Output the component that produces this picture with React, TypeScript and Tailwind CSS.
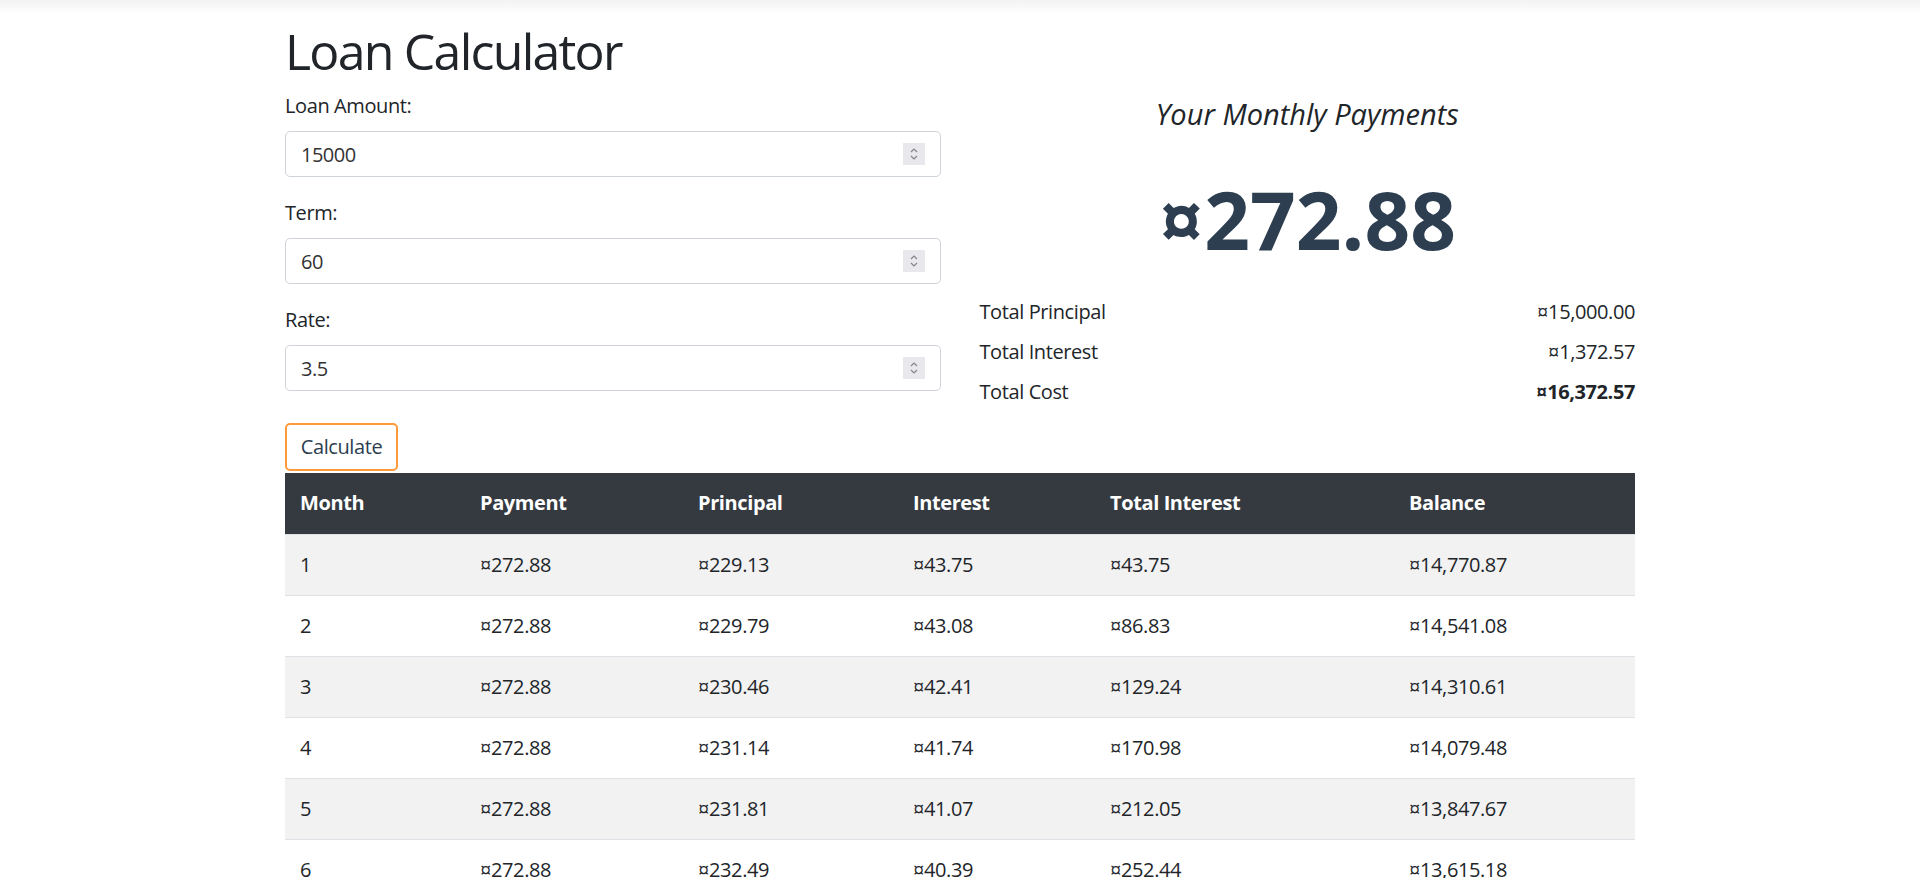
import { useState } from "react"

type Row = {
  month: number
  payment: string
  principal: string
  interest: string
  totalInterest: string
  balance: string
}

const rows: Row[] = [
  { month: 1, payment: "¤272.88", principal: "¤229.13", interest: "¤43.75", totalInterest: "¤43.75", balance: "¤14,770.87" },
  { month: 2, payment: "¤272.88", principal: "¤229.79", interest: "¤43.08", totalInterest: "¤86.83", balance: "¤14,541.08" },
  { month: 3, payment: "¤272.88", principal: "¤230.46", interest: "¤42.41", totalInterest: "¤129.24", balance: "¤14,310.61" },
  { month: 4, payment: "¤272.88", principal: "¤231.14", interest: "¤41.74", totalInterest: "¤170.98", balance: "¤14,079.48" },
  { month: 5, payment: "¤272.88", principal: "¤231.81", interest: "¤41.07", totalInterest: "¤212.05", balance: "¤13,847.67" },
  { month: 6, payment: "¤272.88", principal: "¤232.49", interest: "¤40.39", totalInterest: "¤252.44", balance: "¤13,615.18" },
]

// small up/down spinner like the native number input
function Spinner() {
  return (
    <div className="absolute right-[16px] top-[12px] flex h-[22px] w-[22px] items-center justify-center bg-[#e9e9ed]">
      <svg width="10" height="16" viewBox="0 0 10 16" fill="none" stroke="#858585" strokeWidth="1.2">
        <path d="M2 6 L5 3 L8 6" />
        <path d="M2 10 L5 13 L8 10" />
      </svg>
    </div>
  )
}

function Field({ label, value, onChange }: { label: string; value: string; onChange: (v: string) => void }) {
  return (
    <div className="mb-[21px]">
      <label className="mb-[10px] block text-[20px] leading-[30px]">{label}</label>
      <div className="relative">
        <input
          value={value}
          onChange={(e) => onChange(e.target.value)}
          className="block h-[46px] w-full rounded-[5px] border border-[#ced4da] bg-white px-[15px] text-[20px] tracking-[-0.025em] text-[#333] outline-none"
        />
        <Spinner />
      </div>
    </div>
  )
}

export default function App() {
  const [amount, setAmount] = useState("15000")
  const [term, setTerm] = useState("60")
  const [rate, setRate] = useState("3.5")

  return (
    <div className="min-h-screen bg-white font-['Open_Sans',sans-serif] tracking-[-0.025em] text-[#212529]">
      <div className="h-[14px] bg-gradient-to-b from-[#f2f2f2] to-white" />
      <div className="mx-auto w-[1350px] pt-[7px]">
        <h1 className="mb-[10px] text-[50px] font-normal leading-[60px] tracking-[-0.035em]">Loan Calculator</h1>

        <div className="grid grid-cols-2 items-start gap-x-[39px]">
          <div>
            <Field label="Loan Amount:" value={amount} onChange={setAmount} />
            <Field label="Term:" value={term} onChange={setTerm} />
            <Field label="Rate:" value={rate} onChange={setRate} />
            <button className="mt-[11px] h-[48px] w-[113px] rounded-[5px] border-2 border-[#fd9a3c] text-[20px] text-[#2c3e50]">
              Calculate
            </button>
          </div>

          <div>
            <div className="mt-[6px] text-center text-[29px] italic leading-[34px] tracking-normal">Your Monthly Payments</div>
            <div className="mt-[40px] text-center text-[80px] font-bold leading-[96px] tracking-normal text-[#2c3e50]">¤272.88</div>
            <div className="mt-[25px] text-[20px]">
              <div className="flex h-[40px] items-center justify-between">
                <span>Total Principal</span>
                <span>¤15,000.00</span>
              </div>
              <div className="flex h-[40px] items-center justify-between">
                <span>Total Interest</span>
                <span>¤1,372.57</span>
              </div>
              <div className="flex h-[40px] items-center justify-between">
                <span>Total Cost</span>
                <span className="font-bold">¤16,372.57</span>
              </div>
            </div>
          </div>
        </div>

        <table className="mt-[2px] w-full border-collapse text-left text-[20px]">
          <thead>
            <tr className="h-[61px] border-b border-[#dee2e6] bg-[#343a40] text-white">
              <th className="w-[180px] px-[15px] font-bold">Month</th>
              <th className="w-[218px] px-[15px] font-bold">Payment</th>
              <th className="w-[215px] px-[15px] font-bold">Principal</th>
              <th className="w-[197px] px-[15px] font-bold">Interest</th>
              <th className="w-[299px] px-[15px] font-bold">Total Interest</th>
              <th className="px-[15px] font-bold">Balance</th>
            </tr>
          </thead>
          <tbody>
            {rows.map((r, i) => (
              <tr key={r.month} className={`h-[61px] border-b border-[#dee2e6] ${i % 2 === 0 ? "bg-[#f2f2f2]" : "bg-white"}`}>
                <td className="px-[15px]">{r.month}</td>
                <td className="px-[15px]">{r.payment}</td>
                <td className="px-[15px]">{r.principal}</td>
                <td className="px-[15px]">{r.interest}</td>
                <td className="px-[15px]">{r.totalInterest}</td>
                <td className="px-[15px]">{r.balance}</td>
              </tr>
            ))}
          </tbody>
        </table>
      </div>
    </div>
  )
}
